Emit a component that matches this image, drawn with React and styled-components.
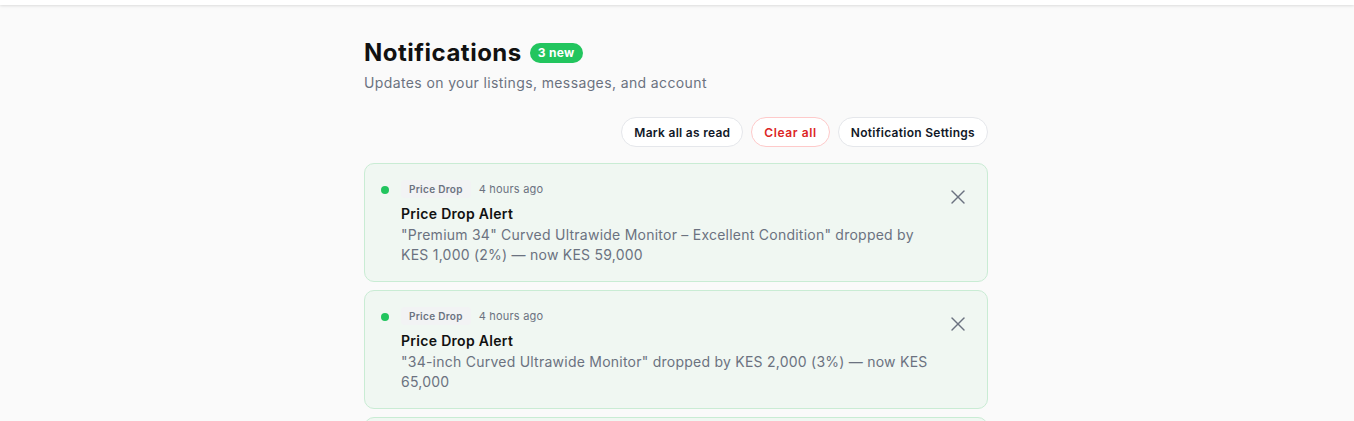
import styled, { createGlobalStyle } from "styled-components"
import { X } from "lucide-react"

const GlobalStyle = createGlobalStyle`
  * { box-sizing: border-box; }
  body {
    margin: 0;
    background: #fafafa;
    font-family: Inter, "Open Sans", sans-serif;
    letter-spacing: 0.3px;
    color: #111827;
  }
`

// 顶部导航（只露出底边）
const TopBar = styled.div`
  height: 5px;
  background: #fff;
  box-shadow: 0 1px 3px rgba(0, 0, 0, 0.12);
`

const Page = styled.main`
  width: 624px;
  margin: 0 auto;
  padding-top: 32px;
  transform: translateX(-1px);
`

const TitleRow = styled.div`
  display: flex;
  align-items: center;
  gap: 8px;
`

const Title = styled.h1`
  margin: 0;
  font-size: 24px;
  line-height: 32px;
  font-weight: 700;
  letter-spacing: 0.5px;
  color: #111;
`

const NewBadge = styled.span`
  background: #22c55e;
  color: #fff;
  font-size: 12px;
  font-weight: 700;
  line-height: 20px;
  padding: 0 8px;
  border-radius: 999px;
`

const Subtitle = styled.p`
  margin: 4px 0 0;
  font-size: 14px;
  line-height: 20px;
  letter-spacing: 0.38px;
  color: #6b7280;
`

const Actions = styled.div`
  display: flex;
  justify-content: flex-end;
  gap: 8px;
  margin-top: 24px;
`

const ActionButton = styled.button`
  height: 30px;
  padding: 0 12px;
  border-radius: 999px;
  background: #fff;
  border: 1px solid ${props => props.$danger ? '#fecaca' : '#e5e7eb'};
  color: ${props => props.$danger ? '#dc2626' : '#111827'};
  font-family: inherit;
  font-size: 12px;
  font-weight: 600;
  letter-spacing: ${props => props.$danger ? '0.6px' : '0.28px'};
  cursor: pointer;
`

const List = styled.div`
  display: flex;
  flex-direction: column;
  gap: 8px;
  margin-top: 16px;
`

const Card = styled.div`
  display: flex;
  align-items: flex-start;
  gap: 12px;
  padding: 16px;
  background: #f0f7f2;
  border: 1px solid #c9ecd4;
  border-radius: 10px;
`

const UnreadDot = styled.span`
  flex: none;
  width: 8px;
  height: 8px;
  margin-top: 6px;
  border-radius: 50%;
  background: #22c55e;
`

const Body = styled.div`
  flex: 1;
  min-width: 0;
`

const Meta = styled.div`
  display: flex;
  align-items: center;
  gap: 8px;
  height: 18px;
`

const TypeTag = styled.span`
  background: #f2f3f4;
  color: #6b7280;
  font-size: 10px;
  font-weight: 600;
  line-height: 18px;
  padding: 0 8px;
  border-radius: 4px;
`

const Time = styled.span`
  font-size: 11px;
  letter-spacing: 0.2px;
  color: #6b7280;
`

const CardTitle = styled.div`
  margin-top: 6px;
  font-size: 14px;
  line-height: 20px;
  font-weight: 600;
  color: #111;
`

const Message = styled.p`
  margin: 1px 0 0;
  font-size: 14px;
  line-height: 20px;
  letter-spacing: 0.24px;
  color: #6b7280;
`

const CloseButton = styled.button`
  flex: none;
  width: 28px;
  height: 28px;
  margin: 3px -1px 0 0;
  display: flex;
  align-items: center;
  justify-content: center;
  padding: 0;
  border: none;
  background: transparent;
  color: #6b7280;
  cursor: pointer;
`

const notifications = [
  {
    id: 1,
    type: 'Price Drop',
    time: '4 hours ago',
    title: 'Price Drop Alert',
    message: '"Premium 34" Curved Ultrawide Monitor – Excellent Condition" dropped by KES 1,000 (2%) — now KES 59,000',
  },
  {
    id: 2,
    type: 'Price Drop',
    time: '4 hours ago',
    title: 'Price Drop Alert',
    message: '"34-inch Curved Ultrawide Monitor" dropped by KES 2,000 (3%) — now KES 65,000',
  },
  {
    id: 3,
    type: 'Price Drop',
    time: '5 hours ago',
    title: 'Price Drop Alert',
    message: '"Gaming Laptop" dropped by KES 5,000 (4%) — now KES 120,000',
  },
]

const App = () => {
  return (
    <>
      <GlobalStyle />
      <TopBar />
      <Page>
        <TitleRow>
          <Title>Notifications</Title>
          <NewBadge>3 new</NewBadge>
        </TitleRow>
        <Subtitle>Updates on your listings, messages, and account</Subtitle>
        <Actions>
          <ActionButton>Mark all as read</ActionButton>
          <ActionButton $danger>Clear all</ActionButton>
          <ActionButton>Notification Settings</ActionButton>
        </Actions>
        <List>
          {notifications.map(n => (
            <Card key={n.id}>
              <UnreadDot />
              <Body>
                <Meta>
                  <TypeTag>{n.type}</TypeTag>
                  <Time>{n.time}</Time>
                </Meta>
                <CardTitle>{n.title}</CardTitle>
                <Message>{n.message}</Message>
              </Body>
              <CloseButton aria-label="Dismiss">
                <X size={24} strokeWidth={1.4} />
              </CloseButton>
            </Card>
          ))}
        </List>
      </Page>
    </>
  )
}

export default App
